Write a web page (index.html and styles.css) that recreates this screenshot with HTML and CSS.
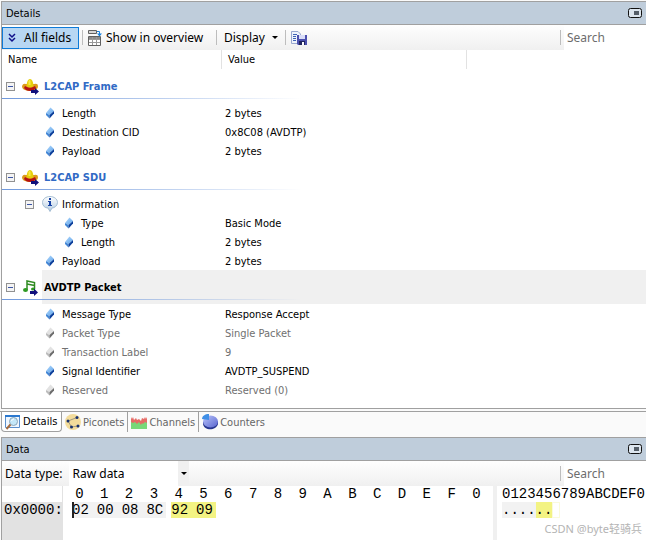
FILE: index.html
```html
<!DOCTYPE html>
<html lang="en">
<head>
  <meta charset="UTF-8" />
  <title>Details</title>
  <link rel="stylesheet" href="styles.css">
</head>
<body>

<!-- ICONS -->
<svg class="sprite" width="0" height="0" aria-hidden="true">
  <defs>
    <linearGradient id="blue" x1="0" y1="0" x2="1" y2="1">
      <stop offset="0" stop-color="#b5dafc"/><stop offset="1" stop-color="#5ba2ea"/>
    </linearGradient>
    <linearGradient id="balloon" x1="0" y1="0" x2="0" y2="1">
      <stop offset="0" stop-color="#ffffff"/><stop offset="1" stop-color="#b4cce2"/>
    </linearGradient>
    <linearGradient id="pie" x1="0" y1="0" x2="1" y2="1">
      <stop offset="0" stop-color="#b9c4fa"/><stop offset="1" stop-color="#5864cf"/>
    </linearGradient>
  </defs>
  <symbol id="field" viewBox="0 0 10 12">
    <path d="M5.500 .5 9 4 4.500 8 1 6z" fill="url(#blue)"/>
    <path d="M1 6 4.500 8V11.500L1 8z" fill="#4387d6"/>
    <path d="M9 4V6.500L4.500 11.500V8z" fill="#0b3f9c"/>
  </symbol>
  <symbol id="field-off" viewBox="0 0 10 12">
    <path d="M5.500 .5 9 4 4.500 8 1 6z" fill="#e2e2e2"/>
    <path d="M1 6 4.500 8V11.500L1 8z" fill="#bcbcbc"/>
    <path d="M9 4V6.500L4.500 11.500V8z" fill="#6c6c6c"/>
  </symbol>
  <symbol id="hat" viewBox="0 0 18 17">
    <path d="M0 8Q1 5 4 6H12Q16 5 16 8Q16 11 13 12Q8 14 3 12Q0 11 0 8z" fill="#dd9a1c"/>
    <path d="M3 8Q8 11 13 8L14 10Q12 13 8 13Q4 13 2 10z" fill="#b51212"/>
    <path d="M4.500 8Q5 1 8 1Q11 1 11.500 8Q8 11 4.500 8z" fill="#e6cf0c"/>
    <path d="M6.500 3Q8 1 8.500 3V7H6.500z" fill="#f6ea4a"/>
    <path d="M9 12H13V10L17 13.500 13 17V15H9z" fill="#10107c"/>
  </symbol>
  <symbol id="music" viewBox="0 0 18 17">
    <path d="M5 11V2L12.500 3.500V10M5 5 12.500 6.500" fill="none" stroke="#2f8a22" stroke-width="1.500"/>
    <ellipse cx="3.500" cy="11" rx="2.500" ry="2" fill="#2f9a22"/>
    <ellipse cx="11" cy="10" rx="2" ry="1.500" fill="#2f9a22"/>
    <path d="M8 12H12V9.500L16 13.500 12 17V15H8z" fill="#10107c"/>
  </symbol>
  <symbol id="info" viewBox="0 0 16 16">
    <path d="M8 .5C12 .5 15.500 3 15.500 6.500C15.500 10 12 12 10 12L8 15.500 6 12C3 12 .5 10 .5 6.500C.5 3 4 .5 8 .5z" fill="url(#balloon)" stroke="#a4bdd3"/>
    <path d="M7 2H9V4H7zM6 5H9V9H10V10H6V9H7V6H6z" fill="#1742a5"/>
  </symbol>
  <symbol id="overview" viewBox="0 0 14 17">
    <path d="M.5 1.500H8.500V4.500H.5z" fill="#d5d5d5" stroke="#606060"/>
    <path d="M.5 7.500H12.500V16.500H.5z" fill="#fff" stroke="#606060"/>
    <path d="M1 8H12V10H1z" fill="#8a8a8a"/>
    <path d="M1 10.500H12M1 13.500H12M4.500 8V16M8.500 8V16" stroke="#999" fill="none"/>
    <path d="M9 2.500H11.500V5" stroke="#1681df" fill="none"/>
    <path d="M9 4.500H14L11.500 7.500z" fill="#1681df"/>
  </symbol>
  <symbol id="save" viewBox="0 0 16 16">
    <path d="M.5 1.500H7L9.500 4V13.500H.5z" fill="#eef3fb" stroke="#9aa8cf"/>
    <path d="M2 4.500H6M2 6.500H5M2 8.500H5M2 10.500H5" stroke="#3f62b5"/>
    <path d="M6 5H16V15H7L6 14z" fill="#4b4fae"/>
    <path d="M8 5H14V9H8z" fill="#d9ddf8"/>
    <path d="M8 11H14V15H8z" fill="#20245f"/>
    <path d="M11 12H13V15H11z" fill="#fff"/>
  </symbol>
  <symbol id="magnify" viewBox="0 0 16 16">
    <path d="M.5 1.500H14.500V13.500H.5z" fill="#f0f7ff" stroke="#5b8fcb"/>
    <path d="M0 1H15V3H0z" fill="#2b78cf"/>
    <circle cx="8.500" cy="7.500" r="4" fill="#c4e7f8" stroke="#8ba6b8"/>
    <path d="M5.500 10.500 1.500 15" stroke="#a66b3e" stroke-width="2"/>
    <path d="M6.500 7Q7 5 9 5" stroke="#fff" fill="none"/>
  </symbol>
  <symbol id="nodes" viewBox="0 0 16 16">
    <circle cx="8" cy="8" r="8" fill="#f3dc9b"/>
    <path d="M12 3.500 3 7 6.500 13 13 12" fill="none" stroke="#a39a80"/>
    <circle cx="12" cy="3.500" r="1.500" fill="#17306f"/><circle cx="3" cy="7" r="1.500" fill="#17306f"/>
    <circle cx="6.500" cy="13" r="1.500" fill="#17306f"/><circle cx="13" cy="12" r="1.500" fill="#17306f"/>
  </symbol>
  <symbol id="channels" viewBox="0 0 16 16">
    <path d="M0 7H16V15H0z" fill="#78d878"/>
    <path d="M0 3 1 5 2 3 3 6 5 4 6 6 8 5 10 7 11 4 13 5 14 3 15 5 16 3V9L14 8 12 10 11 9 10 11 8 8 6 10 4 8 2 9 0 8z" fill="#e66b66"/>
  </symbol>
  <symbol id="counter" viewBox="0 0 16 16">
    <path d="M1 8V10C2 17 14 17 16 10V7z" fill="#27368f"/>
    <ellipse cx="8.500" cy="7.500" rx="7.500" ry="6" fill="url(#pie)"/>
    <path d="M7 6V0C3 0 0 2 0 5z" fill="#3f8fe6"/>
  </symbol>
  <symbol id="float" viewBox="0 0 14 10">
    <rect x=".5" y=".5" width="13" height="9" rx="2" fill="#dce5ee" stroke="#111"/>
    <path d="M6 3H11V7H6z" fill="#555e68"/>
  </symbol>
</svg>

<!-- DETAILS -->
<section class="panel">
  <div class="title-bar">
    <span>Details</span>
    <button class="float-btn" aria-label="Float"><svg width="14" height="10"><use href="#float"/></svg></button>
  </div>
  <div class="toolbar">
    <button class="tool active"><svg width="8" height="10" viewBox="0 0 8 10"><path d="M1 1 4 4 7 1M1 5 4 8 7 5" fill="none" stroke="#10108a" stroke-width="1.500"/></svg>All fields</button>
    <span class="sep"></span>
    <button class="tool overview"><svg width="14" height="17"><use href="#overview"/></svg>Show in overview</button>
    <span class="sep"></span>
    <button class="tool display">Display<span class="arrow"></span></button>
    <span class="sep"></span>
    <button class="tool save" aria-label="Save"><svg width="16" height="16"><use href="#save"/></svg></button>
    <span class="sep last"></span>
    <input class="search" type="text" placeholder="Search" aria-label="Search details">
  </div>

  <table class="tree">
    <colgroup><col class="name-col"><col class="value-col"><col></colgroup>
    <thead>
      <tr><th>Name</th><th>Value</th><th></th></tr>
    </thead>
    <tbody>
      <tr class="group"><td colspan="3"><div class="cell"><button class="toggle" aria-label="Collapse"></button><svg width="18" height="17"><use href="#hat"/></svg>L2CAP Frame</div></td></tr>
      <tr><td><div class="cell leaf"><svg width="10" height="12"><use href="#field"/></svg>Length</div></td><td>2 bytes</td><td></td></tr>
      <tr><td><div class="cell leaf"><svg width="10" height="12"><use href="#field"/></svg>Destination CID</div></td><td>0x8C08 (AVDTP)</td><td></td></tr>
      <tr><td><div class="cell leaf"><svg width="10" height="12"><use href="#field"/></svg>Payload</div></td><td>2 bytes</td><td></td></tr>

      <tr class="group"><td colspan="3"><div class="cell"><button class="toggle" aria-label="Collapse"></button><svg width="18" height="17"><use href="#hat"/></svg>L2CAP SDU</div></td></tr>
      <tr><td><div class="cell node"><button class="toggle" aria-label="Collapse"></button><svg width="16" height="16"><use href="#info"/></svg>Information</div></td><td></td><td></td></tr>
      <tr><td><div class="cell leaf deep"><svg width="10" height="12"><use href="#field"/></svg>Type</div></td><td>Basic Mode</td><td></td></tr>
      <tr><td><div class="cell leaf deep"><svg width="10" height="12"><use href="#field"/></svg>Length</div></td><td>2 bytes</td><td></td></tr>
      <tr><td><div class="cell leaf"><svg width="10" height="12"><use href="#field"/></svg>Payload</div></td><td>2 bytes</td><td></td></tr>

      <tr class="group selected"><td colspan="3"><div class="cell"><button class="toggle" aria-label="Collapse"></button><svg width="18" height="17"><use href="#music"/></svg>AVDTP Packet</div></td></tr>
      <tr><td><div class="cell leaf"><svg width="10" height="12"><use href="#field"/></svg>Message Type</div></td><td>Response Accept</td><td></td></tr>
      <tr class="off"><td><div class="cell leaf"><svg width="10" height="12"><use href="#field-off"/></svg>Packet Type</div></td><td>Single Packet</td><td></td></tr>
      <tr class="off"><td><div class="cell leaf"><svg width="10" height="12"><use href="#field-off"/></svg>Transaction Label</div></td><td>9</td><td></td></tr>
      <tr><td><div class="cell leaf"><svg width="10" height="12"><use href="#field"/></svg>Signal Identifier</div></td><td>AVDTP_SUSPEND</td><td></td></tr>
      <tr class="off"><td><div class="cell leaf"><svg width="10" height="12"><use href="#field-off"/></svg>Reserved</div></td><td>Reserved (0)</td><td></td></tr>
    </tbody>
  </table>
</section>

<!-- TABS -->
<nav class="tabs">
  <button class="tab current"><svg width="16" height="16"><use href="#magnify"/></svg>Details</button>
  <button class="tab"><svg width="16" height="16"><use href="#nodes"/></svg>Piconets</button>
  <button class="tab"><svg width="16" height="16"><use href="#channels"/></svg>Channels</button>
  <button class="tab"><svg width="16" height="16"><use href="#counter"/></svg>Counters</button>
</nav>

<!-- DATA -->
<section class="panel data">
  <div class="title-bar">
    <span>Data</span>
    <button class="float-btn" aria-label="Float"><svg width="14" height="10"><use href="#float"/></svg></button>
  </div>
  <div class="toolbar">
    <label for="data-type">Data type:</label>
    <div class="select-box">
      <select id="data-type"><option>Raw data</option></select>
      <span class="arrow"></span>
    </div>
    <span class="sep last"></span>
    <input class="search" type="text" placeholder="Search" aria-label="Search data">
  </div>

  <div class="dump">
    <div class="offsets"><div class="line"></div><div class="line">0x0000:</div></div>
    <div class="hex">
      <table>
        <thead>
          <tr><th>0</th><th>1</th><th>2</th><th>3</th><th>4</th><th>5</th><th>6</th><th>7</th><th>8</th><th>9</th><th>A</th><th>B</th><th>C</th><th>D</th><th>E</th><th>F</th><th>0</th></tr>
        </thead>
        <tbody>
          <tr><td class="head first"><span class="caret"></span>02</td><td class="head">00</td><td class="head">08</td><td class="head last">8C</td><td class="mark first">92</td><td class="mark last">09</td><td></td><td></td><td></td><td></td><td></td><td></td><td></td><td></td><td></td><td></td><td></td></tr>
        </tbody>
      </table>
    </div>
    <div class="ascii">
      <div class="line">0123456789ABCDEF0</div>
      <div class="line"><span class="head">....</span><span class="mark">..</span><span class="next"></span></div>
    </div>
  </div>
  <div class="watermark">CSDN @byte轻骑兵</div>
</section>

</body>
</html>
```
FILE: styles.css
```css
* {
  box-sizing: border-box;
}

body {
  margin: 0;
  padding-top: 1px;
  min-height: 100vh;
  display: flex;
  flex-direction: column;
  overflow: hidden;
  background: #fafafa;
  color: #000;
  font-family: "DejaVu Sans Condensed", "DejaVu Sans", sans-serif;
  font-size: 11px;
}

.sprite {
  position: absolute;
}

svg {
  flex: none;
}

button, input, select {
  margin: 0;
  padding: 0;
  border: none;
  background: none;
  color: inherit;
  font: inherit;
}

.panel {
  margin-left: 1px;
  border: 1px solid #a0a0a0;
  border-right: none;
  background: #fff;
}

.title-bar {
  display: flex;
  align-items: center;
  justify-content: space-between;
  height: 23px;
  padding: 0 4px;
  background: #bfcddb;
  border-bottom: 1px solid #a0a0a0;
  font-size: 11px;
}

.float-btn {
  display: flex;
}

/* toolbar */
.toolbar {
  display: flex;
  align-items: center;
  height: 25px;
  background: linear-gradient(#fefefe, #f0f0f0);
  font-family: "Noto Sans", sans-serif;
  font-size: 12px;
}

.tool {
  display: flex;
  align-items: center;
  height: 22px;
  white-space: nowrap;
}

.tool.active {
  gap: 8px;
  width: 77px;
  padding-left: 5px;
  background: #b8d7f3;
  border: 1px solid #0f7bd8;
}

.tool.overview {
  gap: 4px;
  width: 125px;
}

.tool.display {
  gap: 7px;
  width: 58px;
  margin-left: 2px;
}

.sep {
  flex: none;
  width: 1px;
  height: 15px;
  margin: 0 5px 0 3px;
  background: #bdbdbd;
}

.sep.last {
  margin: 0 3px 0 auto;
}

.arrow {
  width: 0;
  height: 0;
  border: 3px solid transparent;
  border-top-color: #000;
  border-bottom: none;
}

.search {
  width: 82px;
  height: 25px;
  padding: 0 3px;
  background: #fff;
}

.search::placeholder {
  color: #6d6d6d;
}

/* field tree */
.tree {
  width: 100%;
  margin-bottom: 9px;
  border-spacing: 0;
  table-layout: fixed;
}

.name-col {
  width: 220px;
}

.value-col {
  width: 245px;
}

.tree th {
  height: 19px;
  padding: 0 6px;
  border-right: 1px solid #e2e2e2;
  font-weight: normal;
  text-align: left;
}

.tree th:last-child {
  border-right: none;
}

.tree td {
  height: 19px;
  padding: 2px 0 0 3px;
  white-space: nowrap;
}

.tree td:first-child {
  padding: 1px 0 0;
}

.cell {
  display: flex;
  align-items: center;
  gap: 7px;
  height: 18px;
  padding-left: 4px;
}

.leaf {
  padding-left: 43px;
}

.leaf.deep {
  padding-left: 62px;
}

.node {
  gap: 4px;
  padding-left: 23px;
}

.node .toggle {
  margin-right: 4px;
}

.off {
  color: #707070;
}

.group td {
  height: 34px;
  background: linear-gradient(to right, #6f98dc, transparent) 0 29px / 300px 1px no-repeat;
  color: #316ac5;
  font-weight: bold;
}

.group .cell {
  gap: 4px;
}

.group .toggle {
  margin-right: 3px;
}

.group.selected td {
  background:
    linear-gradient(to right, #6f98dc, transparent) 0 29px / 300px 1px no-repeat,
    linear-gradient(#f0f0f0, #f0f0f0) 40px 0 no-repeat;
  color: #000;
}

.toggle {
  flex: none;
  width: 9px;
  height: 9px;
  border: 1px solid #919191;
  background: linear-gradient(#3b55a5, #3b55a5) center / 5px 1px no-repeat, #f4f4f4;
}

/* tabs */
.tabs {
  display: flex;
  height: 26px;
  margin-top: 2px;
  padding-left: 1px;
  border-top: 1px solid #a0a0a0;
}

.tab {
  display: flex;
  align-items: center;
  gap: 2px;
  height: 20px;
  padding: 0 3px;
  color: #666;
}

.tab + .tab + .tab {
  border-left: 1px solid #a0a0a0;
}

.tab.current {
  width: 61px;
  background: #fff;
  border: 1px solid #a0a0a0;
  border-top: none;
  border-radius: 0 0 4px 4px;
  color: #000;
}

/* data panel */
.data {
  position: relative;
  flex: 1;
  border-bottom: none;
}

.toolbar label {
  padding-left: 3px;
}

.select-box {
  display: flex;
  align-items: center;
  width: 120px;
  height: 25px;
  margin-left: 6px;
  padding-right: 2px;
  background: linear-gradient(to right, #fff 109px, #f0f0f0 109px);
}

.select-box select {
  flex: 1;
  padding-left: 4px;
  appearance: none;
}

.dump {
  display: flex;
  min-height: 54px;
  font-family: "Liberation Mono", monospace;
  font-size: 14px;
  line-height: 16px;
}

.line {
  height: 16px;
  white-space: nowrap;
}

.offsets {
  width: 61px;
  padding-left: 2px;
  background: linear-gradient(#fff 16px, #e2e2e2 16px);
  border-right: 1px solid #e2e2e2;
}

.hex {
  flex: 1;
  padding: 0 4px;
}

.hex table {
  width: 100%;
  border-collapse: collapse;
  table-layout: fixed;
}

.hex th {
  padding: 0;
  font-weight: normal;
}

.hex td {
  position: relative;
  height: 16px;
  padding: 0 0 0 5px;
}

.hex .first {
  background-clip: content-box;
}

.hex .last {
  padding-right: 3px;
}

.head {
  background: #f2f2f2;
}

.mark {
  background: #f3f383;
}

.caret {
  position: absolute;
  left: 5px;
  top: 0;
  width: 2px;
  height: 16px;
  background: #222;
}

.ascii {
  width: 153px;
  padding-left: 5px;
  border-left: 4px solid #f0f0f0;
}

.ascii .line {
  display: flex;
}

.next {
  width: 8px;
  border: 1px solid #fafadc;
}

.watermark {
  position: absolute;
  right: 4px;
  bottom: 2px;
  color: #b4b4b4;
  font-family: "Noto Sans", "Noto Sans CJK SC", sans-serif;
  font-size: 11px;
  line-height: 18px;
}
```
